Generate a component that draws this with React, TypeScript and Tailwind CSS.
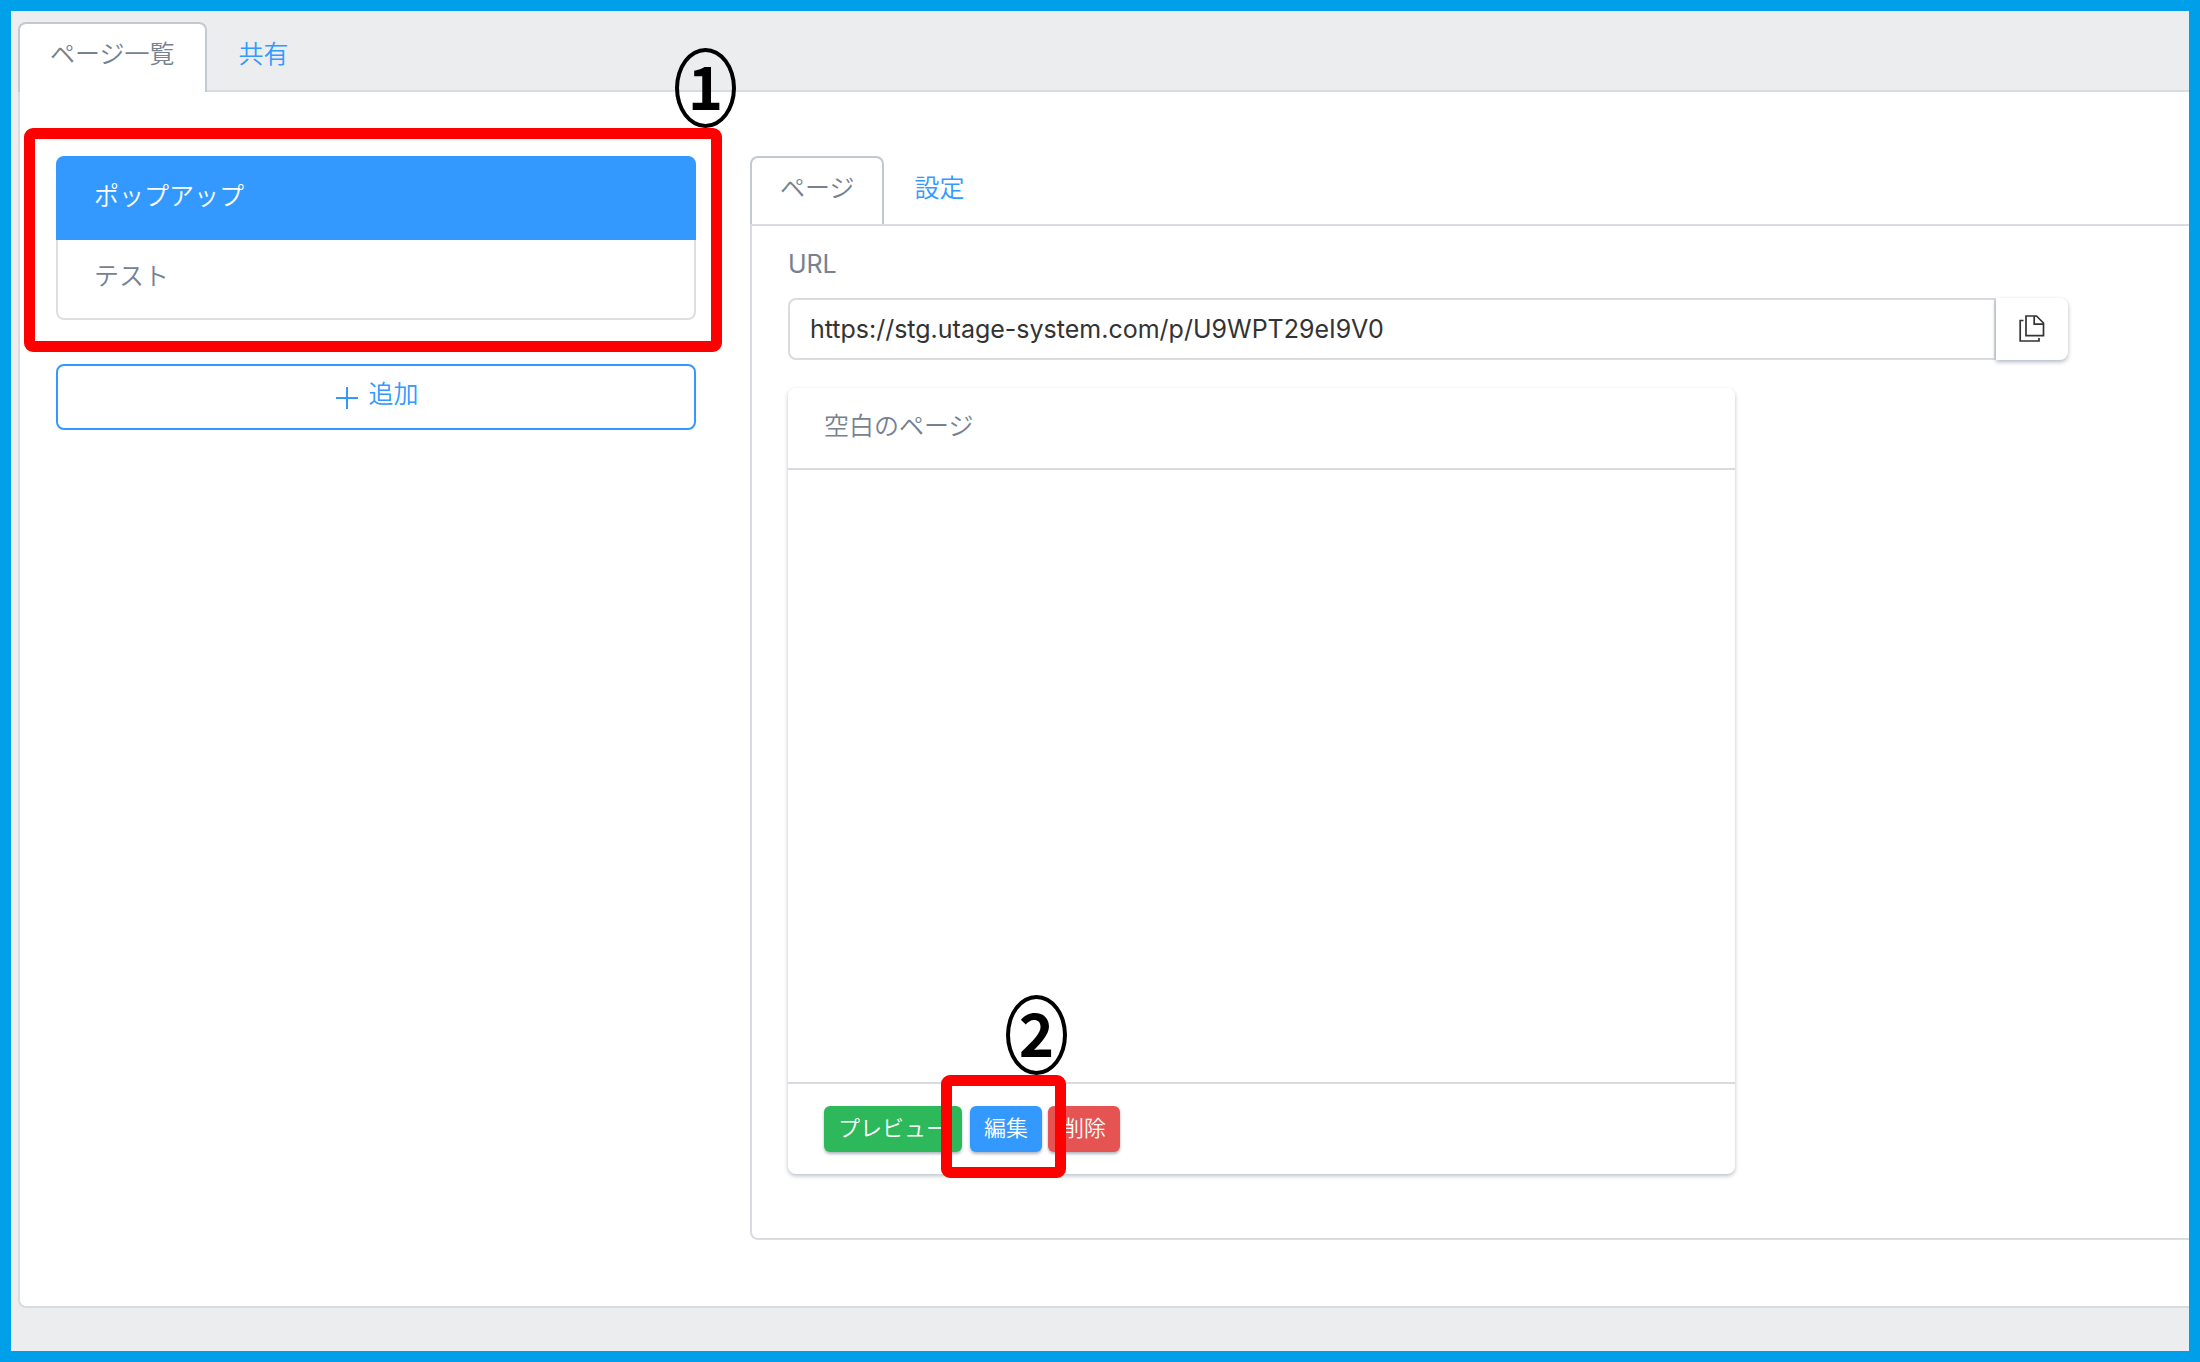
import { useState, type ReactNode } from 'react';

const FONT = "font-['Inter','Noto_Sans_CJK_JP',sans-serif]";

const pages = ['ポップアップ', 'テスト'];

function Tabs({ items, className, tabClass }: { items: string[]; className?: string; tabClass: string }) {
  const [active, setActive] = useState(0);
  return (
    <div role="tablist" className={`relative -mb-[2px] flex ${className ?? ''}`}>
      {items.map((label, i) => (
        <button
          key={label}
          type="button"
          role="tab"
          aria-selected={i === active}
          onClick={() => setActive(i)}
          className={`cursor-pointer rounded-t-lg border-2 border-b-0 pt-3 pb-5 leading-9 ${tabClass} ${
            i === active ? 'border-[#c4c9d0] bg-white text-[#768192]' : 'border-transparent text-[#3399ff]'
          }`}
        >
          {label}
        </button>
      ))}
    </div>
  );
}

// red frame with a numbered marker above its right corner
function Callout({ step, className, badgeClass }: { step: number; className: string; badgeClass: string }) {
  return (
    <div className={`pointer-events-none absolute z-10 ${className}`}>
      <div className="h-full rounded-[9px] border-[11px] border-[#ff0000]" />
      <span
        className={`absolute bottom-full flex h-20 w-[61px] items-center justify-center rounded-[50%] border-4 border-black pb-2 font-['Noto_Sans_CJK_JP',sans-serif] text-[60px] leading-none font-bold text-black ${badgeClass}`}
      >
        {step}
      </span>
    </div>
  );
}

function CopyIcon() {
  return (
    <svg width="26" height="28" viewBox="0 0 26 28" fill="none" stroke="#333" strokeWidth="1.7" aria-hidden="true">
      <path d="M4.5 5.5H1.2V26H20V23" />
      <path d="M7 1H17.5L24.5 8V20.6H7Z" />
      <path d="M15.2 1V9.2H24.5" />
    </svg>
  );
}

function SmallButton({ color, children }: { color: string; children: ReactNode }) {
  return (
    <button
      type="button"
      className={`cursor-pointer rounded-md px-[14px] pt-[6px] pb-2 text-[22px] leading-8 text-white shadow-[0_2px_3px_rgba(60,75,100,0.4)] ${color}`}
    >
      {children}
    </button>
  );
}

export default function App() {
  const [selected, setSelected] = useState(0);
  const [url, setUrl] = useState('https://stg.utage-system.com/p/U9WPT29eI9V0');

  return (
    <div className={`flex min-h-screen flex-col overflow-hidden border-[11px] border-[#009fe9] bg-[#ebedef] text-[25px] font-[350] text-[#768192] ${FONT}`}>
      <div className="flex grow flex-col pt-[11px] pb-[43px] pl-[7px]">
        <Tabs items={['ページ一覧', '共有']} className="z-[1]" tabClass="px-[30px]" />

        <main className="flex grow items-start rounded-bl-lg border-2 border-r-0 border-[#d8dbe0] bg-white pt-16 pb-[66px] pl-9">
          <aside className="w-[30%] shrink-0">
            <div className="relative">
              <ul>
                {pages.map((name, i) => (
                  <li key={name}>
                    <button
                      type="button"
                      onClick={() => setSelected(i)}
                      className={`block w-full cursor-pointer border-2 px-9 text-left leading-10 ${
                        i === 0 ? 'rounded-t-lg pt-[18px] pb-[22px]' : 'rounded-b-lg border-t-0 pt-4 pb-[22px]'
                      } ${i === selected ? 'border-[#3399ff] bg-[#3399ff] text-white' : 'border-[#dfdfdf] bg-white'}`}
                    >
                      {name}
                    </button>
                  </li>
                ))}
              </ul>
              <Callout step={1} className="-top-7 -right-[26px] -bottom-8 -left-8" badgeClass="-right-[14px]" />
            </div>

            <button
              type="button"
              className="mt-11 flex w-full cursor-pointer items-center justify-center gap-[10px] rounded-lg border-2 border-[#3399ff] pt-2 pb-[14px] pl-[3px] leading-10 text-[#3399ff]"
            >
              <svg className="mt-2" width="22" height="22" viewBox="0 0 22 22" stroke="currentColor" strokeWidth="2" aria-hidden="true">
                <path d="M11 0V22M0 11H22" />
              </svg>
              追加
            </button>
          </aside>

          <section className="ml-[54px] min-w-0 grow">
            <Tabs items={['ページ', '設定']} tabClass="px-7" />

            <div className="relative rounded-bl-lg border-2 border-r-0 border-[#d8dbe0] pt-5 pr-[121px] pb-16 pl-9">
              <label htmlFor="page-url" className="block leading-9 font-normal">
                URL
              </label>
              <div className="mt-4 flex">
                <input
                  id="page-url"
                  type="text"
                  value={url}
                  onChange={(e) => setUrl(e.target.value)}
                  className="min-w-0 grow rounded-l-lg border-2 border-[#d8dbe0] px-5 py-[11px] leading-9 font-normal text-[#333]"
                />
                <button
                  type="button"
                  aria-label="コピー"
                  className="flex w-[72px] cursor-pointer items-center justify-center rounded-r-lg bg-white shadow-[0_2px_4px_rgba(60,75,100,0.4)]"
                >
                  <CopyIcon />
                </button>
              </div>

              <article className="mt-7 w-[74%] rounded-lg bg-white shadow-[0_2px_4px_rgba(60,75,100,0.35)]">
                <h2 className="border-b-2 border-[#d8dbe0] px-9 pt-[18px] pb-[22px] leading-10">空白のページ</h2>
                <div className="h-[612px]" />
                <footer className="flex border-t-2 border-[#d8dbe0] px-9 py-[22px]">
                  <SmallButton color="bg-[#2eb85c]">プレビュー</SmallButton>
                  <div className="relative mr-[6px] ml-2">
                    <SmallButton color="bg-[#3399ff]">編集</SmallButton>
                    <Callout step={2} className="-top-[31px] -right-6 -bottom-[26px] -left-[29px]" badgeClass="-right-px" />
                  </div>
                  <SmallButton color="bg-[#e55353]">削除</SmallButton>
                </footer>
              </article>
            </div>
          </section>
        </main>
      </div>
    </div>
  );
}
